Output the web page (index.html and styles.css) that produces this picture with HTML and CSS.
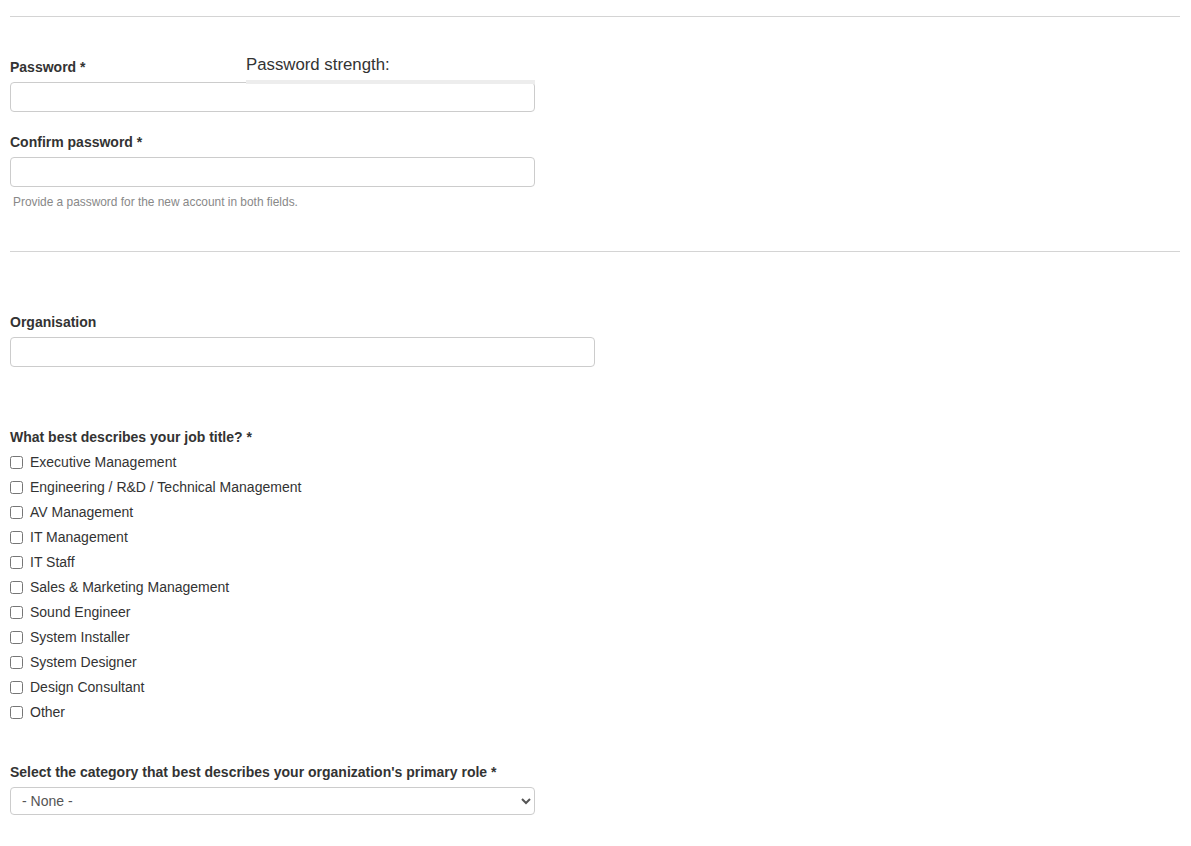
FILE: index.html
```html
<!DOCTYPE html>
<html lang="en">
<head>
<meta charset="utf-8">
<title>Account</title>
<link rel="stylesheet" href="styles.css">
</head>
<body>
<div class="page">
  <hr class="divider first">

  <div class="form-item password-item">
    <label class="field-label" for="pass1">Password *</label>
    <input class="text-input narrow" id="pass1" type="password">
    <div class="strength">
      <div class="strength-title">Password strength:</div>
      <div class="strength-bar"></div>
    </div>
  </div>

  <div class="form-item confirm-item">
    <label class="field-label" for="pass2">Confirm password *</label>
    <input class="text-input narrow" id="pass2" type="password">
    <div class="description">Provide a password for the new account in both fields.</div>
  </div>

  <hr class="divider second">

  <div class="form-item org-item">
    <label class="field-label" for="org">Organisation</label>
    <input class="text-input wide" id="org" type="text">
  </div>

  <div class="form-item job-item">
    <div class="field-label tight">What best describes your job title? *</div>
    <div class="checks">
      <label class="check"><input type="checkbox"><span>Executive Management</span></label>
      <label class="check"><input type="checkbox"><span>Engineering / R&amp;D / Technical Management</span></label>
      <label class="check"><input type="checkbox"><span>AV Management</span></label>
      <label class="check"><input type="checkbox"><span>IT Management</span></label>
      <label class="check"><input type="checkbox"><span>IT Staff</span></label>
      <label class="check"><input type="checkbox"><span>Sales &amp; Marketing Management</span></label>
      <label class="check"><input type="checkbox"><span>Sound Engineer</span></label>
      <label class="check"><input type="checkbox"><span>System Installer</span></label>
      <label class="check"><input type="checkbox"><span>System Designer</span></label>
      <label class="check"><input type="checkbox"><span>Design Consultant</span></label>
      <label class="check"><input type="checkbox"><span>Other</span></label>
    </div>
  </div>

  <div class="form-item role-item">
    <label class="field-label select-label" for="role">Select the category that best describes your organization's primary role *</label>
    <select class="select-input" id="role">
      <option>- None -</option>
    </select>
  </div>
</div>
</body>
</html>
```

FILE: styles.css
```css
html, body {
  margin: 0;
  padding: 0;
  background: #fff;
}

body {
  font-family: "Liberation Sans", Arial, Helvetica, sans-serif;
  font-size: 14px;
  line-height: 20px;
  color: #333;
}

.page {
  padding: 0 11px 40px 10px;
}

.divider {
  border: 0;
  border-top: 1px solid #d4d4d4;
  margin: 0;
}

.divider.first {
  margin-top: 16px;
}

.divider.second {
  margin-top: 40px;
}

.form-item {
  position: relative;
}

.password-item {
  margin-top: 40px;
}

.confirm-item {
  margin-top: 20px;
}

.org-item {
  margin-top: 60px;
}

.job-item {
  margin-top: 60px;
}

.role-item {
  margin-top: 38px;
}

.field-label {
  display: block;
  font-weight: bold;
  font-size: 14px;
  line-height: 20px;
  margin-bottom: 5px;
  color: #333;
}

.field-label.tight {
  margin-bottom: 2px;
}

.field-label.select-label {
  margin-bottom: 5px;
}

.text-input {
  display: block;
  box-sizing: border-box;
  height: 30px;
  padding: 4px 10px;
  border: 1px solid #ccc;
  border-radius: 4px;
  background: #fff;
  font: inherit;
  color: #555;
  margin: 0;
}

.text-input.narrow {
  width: 525px;
}

.text-input.wide {
  width: 585px;
}

.strength {
  position: absolute;
  left: 236px;
  top: -2px;
  width: 289px;
}

.strength-title {
  font-size: 16.8px;
  line-height: 20px;
  color: #333;
}

.strength-bar {
  margin-top: 5px;
  height: 4px;
  background: #ededed;
}

.description {
  margin-top: 7px;
  padding-left: 3px;
  font-size: 11.9px;
  line-height: 17px;
  color: #888;
}

.checks {
  display: flex;
  flex-direction: column;
}

.check {
  display: flex;
  align-items: center;
  height: 25px;
  font-size: 14px;
  color: #333;
}

.check input {
  margin: 1px 7px 0 0;
  width: 13px;
  height: 13px;
}

.select-input {
  display: block;
  box-sizing: border-box;
  width: 525px;
  height: 28px;
  padding: 2px 7px;
  border: 1px solid #ccc;
  border-radius: 4px;
  background: #fff;
  font-family: "Liberation Sans", Arial, Helvetica, sans-serif;
  font-size: 14px;
  color: #555;
  margin: 0;
}
```
